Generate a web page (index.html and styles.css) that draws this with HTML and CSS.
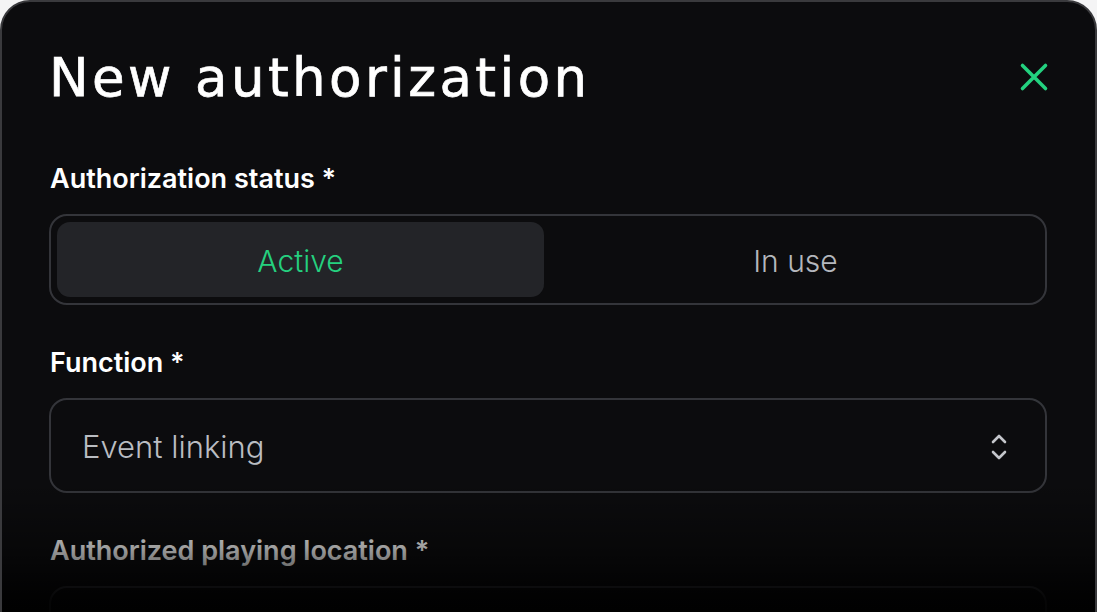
FILE: index.html
```html
<!DOCTYPE html>
<html lang="en">
<head>
<meta charset="utf-8">
<title>New authorization</title>
<link rel="stylesheet" href="styles.css">
</head>
<body>
<div class="modal">
  <header class="head">
    <h1 class="title">New authorization</h1>
    <button class="close" aria-label="Close">
      <svg width="30" height="30" viewBox="0 0 30 30"><path d="M3.5 3.5 L26.5 26.5 M26.5 3.5 L3.5 26.5" stroke="#23d17f" stroke-width="3.6" stroke-linecap="round" fill="none"/></svg>
    </button>
  </header>
  <div class="field">
    <div class="label">Authorization status *</div>
    <div class="seg">
      <div class="seg-item on">Active</div>
      <div class="seg-item">In use</div>
    </div>
  </div>
  <div class="field">
    <div class="label">Function *</div>
    <div class="select">
      <span class="value">Event linking</span>
      <svg class="chev" width="20" height="30" viewBox="0 0 20 30"><path d="M4 10 L10 4 L16 10 M4 20 L10 26 L16 20" stroke="#c4c6cb" stroke-width="2.6" stroke-linecap="round" stroke-linejoin="round" fill="none"/></svg>
    </div>
  </div>
  <div class="field">
    <div class="label">Authorized playing location *</div>
    <div class="select"></div>
  </div>
  <div class="fade"></div>
</div>
</body>
</html>
```
FILE: styles.css
```css
html, body {
  margin: 0;
  padding: 0;
  background: #f4f4f5;
  height: 100%;
  overflow: hidden;
}
.modal {
  position: relative;
  box-sizing: border-box;
  width: 1097px;
  height: 640px;
  background: #0c0c0e;
  border: 2px solid #3a3a3d;
  border-radius: 30px 30px 0 0;
  padding: 48px 48px 0 47px;
  overflow: hidden;
  font-family: "Inter", "Liberation Sans", sans-serif;
  color: #fff;
}
.head {
  display: flex;
  align-items: center;
  justify-content: space-between;
  height: 56px;
  margin-bottom: 57px;
}
.title {
  margin: 0;
  font-family: "DejaVu Sans", sans-serif;
  font-weight: 500;
  font-size: 53px;
  line-height: 56px;
  letter-spacing: 3.4px;
  -webkit-text-stroke: 0.7px #fff;
  color: #fff;
}
.close {
  background: none;
  border: 0;
  padding: 0;
  width: 30px;
  height: 30px;
  margin-right: -2px;
  margin-top: -3px;
  cursor: pointer;
}
.close svg { display: block; }
.field { margin-bottom: 42px; }
.label {
  font-family: "Inter", sans-serif;
  font-weight: 600;
  font-size: 27px;
  line-height: 32px;
  margin-left: 1px;
  margin-bottom: 19px;
  color: #fff;
}
.seg {
  display: grid;
  grid-template-columns: 1fr 1fr;
  gap: 8px;
  height: 91px;
  box-sizing: border-box;
  border: 2px solid #34353a;
  border-radius: 18px;
  padding: 6px;
}
.seg-item {
  display: flex;
  align-items: center;
  justify-content: center;
  border-radius: 13px;
  font-size: 30px;
  font-weight: 300;
  color: #b4b7bd;
  padding-top: 2px;
}
.seg-item.on {
  background: #232428;
  color: #25d07f;
}
.select {
  display: flex;
  align-items: center;
  justify-content: space-between;
  box-sizing: border-box;
  height: 95px;
  border: 2px solid #34353a;
  border-radius: 18px;
  padding: 2px 36px 0 31px;
}
.value {
  font-size: 31px;
  font-weight: 300;
  color: #babdc2;
}
.fade {
  position: absolute;
  left: 0;
  right: 0;
  top: 480px;
  bottom: 0;
  background: linear-gradient(to bottom, rgba(0,0,0,0) 0%, rgba(0,0,0,0.38) 42%, rgba(0,0,0,0.88) 75%, rgba(0,0,0,1) 100%);
  pointer-events: none;
}
```
